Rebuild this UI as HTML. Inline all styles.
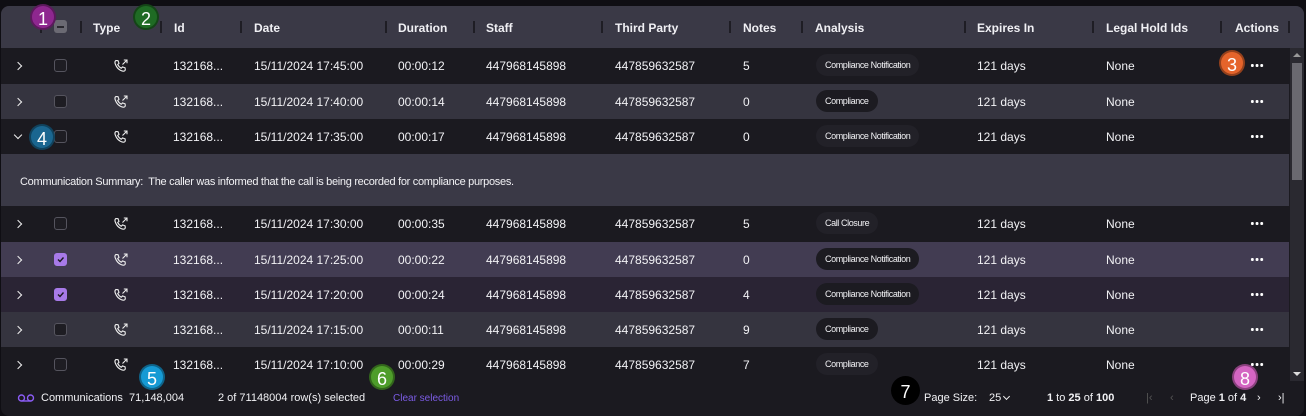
<!DOCTYPE html>
<html><head><meta charset="utf-8"><style>
*{margin:0;padding:0;box-sizing:border-box}
body{width:1306px;height:416px;background:#0f0e13;font-family:"Liberation Sans",sans-serif;color:#f2f2f5;overflow:hidden;position:relative}
.wrap{position:absolute;left:1px;top:6px;width:1303px;height:410px;background:#1b1a20;border-radius:8px;overflow:hidden}
.hdr{position:absolute;left:0;top:0;width:100%;height:42px;background:#3a3946}
.h{position:absolute;top:15px;font-size:12px;font-weight:bold;color:#f0f0f4}
.sep{position:absolute;top:15px;width:2px;height:12px;background:#1e1d24}
.row{position:absolute;left:0;width:1288px;height:35px;font-size:12px}
.d{background:#1b1a20}.l{background:#35343f}.s1{background:#423c52}.s2{background:#2a2434}
.row span{position:absolute;top:11px;white-space:nowrap}
.chev{position:absolute;left:14px;top:15px;width:6px;height:6px;border-right:1.6px solid #eee;border-top:1.6px solid #eee;transform:rotate(45deg)}
.cb{position:absolute;left:53px;top:11px;width:13px;height:13px;border:1px solid #55545e;border-radius:3px;background:#1e1d23}
.cb.on{background:#a77ae8;border-color:#a77ae8}
.ph{position:absolute;left:111px;top:9px}
.pill{position:absolute;left:815px;top:6px;height:22px;border-radius:11px;padding:0 9px;font-size:9px;line-height:22px;letter-spacing:-0.4px;background:#222128}
.l .pill{background:#1c1b21}
.s1 .pill{background:#1c1b21}.s2 .pill{background:#1c1b21}
.dots{position:absolute;left:1249px;top:16px;width:14px;height:3px;background:radial-gradient(circle,#fff 1.4px,transparent 1.6px) 0 0/4.7px 3px repeat-x}
.badge{position:absolute;width:26px;height:26px;border-radius:50%;color:#fff;font-size:18px;text-align:center;line-height:26px;border:2px solid rgba(0,0,0,.35)}
.foot{position:absolute;font-size:11px;top:392px}
</style></head><body>
<div class="wrap">
<div class="hdr">
<div style="position:absolute;left:53px;top:14px;width:13px;height:13px;background:#6b6a73;border-radius:3px"><div style="position:absolute;left:3px;top:6px;width:7px;height:1.5px;background:#2a2930"></div></div>
<div class="sep" style="left:39px"></div><div class="sep" style="left:79px"></div>
<div class="h" style="left:92px">Type</div><div class="sep" style="left:159px"></div>
<div class="h" style="left:173px">Id</div><div class="sep" style="left:239px"></div>
<div class="h" style="left:253px">Date</div><div class="sep" style="left:384px"></div>
<div class="h" style="left:397px">Duration</div><div class="sep" style="left:472px"></div>
<div class="h" style="left:485px">Staff</div><div class="sep" style="left:600px"></div>
<div class="h" style="left:614px">Third Party</div><div class="sep" style="left:728px"></div>
<div class="h" style="left:742px">Notes</div><div class="sep" style="left:800px"></div>
<div class="h" style="left:814px">Analysis</div><div class="sep" style="left:963px"></div>
<div class="h" style="left:976px">Expires In</div><div class="sep" style="left:1091px"></div>
<div class="h" style="left:1105px">Legal Hold Ids</div><div class="sep" style="left:1219px"></div>
<div class="h" style="left:1234px">Actions</div><div class="sep" style="left:1287px"></div>
</div>

<div class="row d" style="top:42px"><i class="chev"></i><i class="cb"></i><svg class="ph" width="18" height="18" viewBox="0 0 18 18" fill="none" stroke="#eee" stroke-width="1.1"><path d="M4 3.5l2 .2 1 2.6-1.3 1.2c.8 1.7 2 2.9 3.6 3.7l1.2-1.3 2.6 1 .2 2c-.3 1-1.2 1.4-2.2 1.3C7.300 13.500 4.400 10.600 3 6.200 2.800 5 3 4 4 3.500z"/><path d="M10.5 7.5L15 3M11.800 3H15v3.200"/></svg><span style="left:172px">132168...</span><span style="left:253px">15/11/2024 17:45:00</span><span style="left:397px">00:00:12</span><span style="left:485px">447968145898</span><span style="left:614px">447859632587</span><span style="left:742px">5</span><div class="pill">Compliance Notification</div><span style="left:976px">121 days</span><span style="left:1105px">None</span><i class="dots"></i></div>

<div class="row l" style="top:78px"><i class="chev"></i><i class="cb"></i><svg class="ph" width="18" height="18" viewBox="0 0 18 18" fill="none" stroke="#eee" stroke-width="1.1"><path d="M4 3.5l2 .2 1 2.6-1.3 1.2c.8 1.7 2 2.9 3.6 3.7l1.2-1.3 2.6 1 .2 2c-.3 1-1.2 1.4-2.2 1.3C7.300 13.500 4.400 10.600 3 6.200 2.800 5 3 4 4 3.500z"/><path d="M10.5 7.5L15 3M11.800 3H15v3.200"/></svg><span style="left:172px">132168...</span><span style="left:253px">15/11/2024 17:40:00</span><span style="left:397px">00:00:14</span><span style="left:485px">447968145898</span><span style="left:614px">447859632587</span><span style="left:742px">0</span><div class="pill">Compliance</div><span style="left:976px">121 days</span><span style="left:1105px">None</span><i class="dots"></i></div>

<div class="row d" style="top:113px"><i class="chev" style="transform:rotate(135deg);top:13px"></i><i class="cb"></i><svg class="ph" width="18" height="18" viewBox="0 0 18 18" fill="none" stroke="#eee" stroke-width="1.1"><path d="M4 3.5l2 .2 1 2.6-1.3 1.2c.8 1.7 2 2.9 3.6 3.7l1.2-1.3 2.6 1 .2 2c-.3 1-1.2 1.4-2.2 1.3C7.300 13.500 4.400 10.600 3 6.200 2.800 5 3 4 4 3.500z"/><path d="M10.5 7.5L15 3M11.800 3H15v3.200"/></svg><span style="left:172px">132168...</span><span style="left:253px">15/11/2024 17:35:00</span><span style="left:397px">00:00:17</span><span style="left:485px">447968145898</span><span style="left:614px">447859632587</span><span style="left:742px">0</span><div class="pill">Compliance Notification</div><span style="left:976px">121 days</span><span style="left:1105px">None</span><i class="dots"></i></div>

<div class="row" style="top:148px;height:52px;background:#3a3946"><span style="left:19px;top:22px;font-size:11px;letter-spacing:-0.3px">Communication Summary:&nbsp; The caller was informed that the call is being recorded for compliance purposes.</span></div>

<div class="row d" style="top:200px"><i class="chev"></i><i class="cb"></i><svg class="ph" width="18" height="18" viewBox="0 0 18 18" fill="none" stroke="#eee" stroke-width="1.1"><path d="M4 3.5l2 .2 1 2.6-1.3 1.2c.8 1.7 2 2.9 3.6 3.7l1.2-1.3 2.6 1 .2 2c-.3 1-1.2 1.4-2.2 1.3C7.300 13.500 4.400 10.600 3 6.200 2.800 5 3 4 4 3.500z"/><path d="M10.5 7.5L15 3M11.800 3H15v3.200"/></svg><span style="left:172px">132168...</span><span style="left:253px">15/11/2024 17:30:00</span><span style="left:397px">00:00:35</span><span style="left:485px">447968145898</span><span style="left:614px">447859632587</span><span style="left:742px">5</span><div class="pill">Call Closure</div><span style="left:976px">121 days</span><span style="left:1105px">None</span><i class="dots"></i></div>

<div class="row s1" style="top:236px"><i class="chev"></i><i class="cb on"><svg width="11" height="11" viewBox="0 0 11 11" style="position:absolute;left:0;top:0"><path d="M3 5.5l2 2 3.5-4" fill="none" stroke="#1b1a20" stroke-width="1.4"/></svg></i><svg class="ph" width="18" height="18" viewBox="0 0 18 18" fill="none" stroke="#eee" stroke-width="1.1"><path d="M4 3.5l2 .2 1 2.6-1.3 1.2c.8 1.7 2 2.9 3.6 3.7l1.2-1.3 2.6 1 .2 2c-.3 1-1.2 1.4-2.2 1.3C7.300 13.500 4.400 10.600 3 6.200 2.800 5 3 4 4 3.500z"/><path d="M10.5 7.5L15 3M11.800 3H15v3.200"/></svg><span style="left:172px">132168...</span><span style="left:253px">15/11/2024 17:25:00</span><span style="left:397px">00:00:22</span><span style="left:485px">447968145898</span><span style="left:614px">447859632587</span><span style="left:742px">0</span><div class="pill">Compliance Notification</div><span style="left:976px">121 days</span><span style="left:1105px">None</span><i class="dots"></i></div>

<div class="row s2" style="top:271px"><i class="chev"></i><i class="cb on"><svg width="11" height="11" viewBox="0 0 11 11" style="position:absolute;left:0;top:0"><path d="M3 5.5l2 2 3.5-4" fill="none" stroke="#1b1a20" stroke-width="1.4"/></svg></i><svg class="ph" width="18" height="18" viewBox="0 0 18 18" fill="none" stroke="#eee" stroke-width="1.1"><path d="M4 3.5l2 .2 1 2.6-1.3 1.2c.8 1.7 2 2.9 3.6 3.7l1.2-1.3 2.6 1 .2 2c-.3 1-1.2 1.4-2.2 1.3C7.300 13.500 4.400 10.600 3 6.200 2.800 5 3 4 4 3.500z"/><path d="M10.5 7.5L15 3M11.800 3H15v3.200"/></svg><span style="left:172px">132168...</span><span style="left:253px">15/11/2024 17:20:00</span><span style="left:397px">00:00:24</span><span style="left:485px">447968145898</span><span style="left:614px">447859632587</span><span style="left:742px">4</span><div class="pill">Compliance Notification</div><span style="left:976px">121 days</span><span style="left:1105px">None</span><i class="dots"></i></div>

<div class="row l" style="top:306px"><i class="chev"></i><i class="cb"></i><svg class="ph" width="18" height="18" viewBox="0 0 18 18" fill="none" stroke="#eee" stroke-width="1.1"><path d="M4 3.5l2 .2 1 2.6-1.3 1.2c.8 1.7 2 2.9 3.6 3.7l1.2-1.3 2.6 1 .2 2c-.3 1-1.2 1.4-2.2 1.3C7.300 13.500 4.400 10.600 3 6.200 2.800 5 3 4 4 3.500z"/><path d="M10.5 7.5L15 3M11.800 3H15v3.200"/></svg><span style="left:172px">132168...</span><span style="left:253px">15/11/2024 17:15:00</span><span style="left:397px">00:00:11</span><span style="left:485px">447968145898</span><span style="left:614px">447859632587</span><span style="left:742px">9</span><div class="pill">Compliance</div><span style="left:976px">121 days</span><span style="left:1105px">None</span><i class="dots"></i></div>

<div class="row d" style="top:341px"><i class="chev"></i><i class="cb"></i><svg class="ph" width="18" height="18" viewBox="0 0 18 18" fill="none" stroke="#eee" stroke-width="1.1"><path d="M4 3.5l2 .2 1 2.6-1.3 1.2c.8 1.7 2 2.9 3.6 3.7l1.2-1.3 2.6 1 .2 2c-.3 1-1.2 1.4-2.2 1.3C7.300 13.500 4.400 10.600 3 6.200 2.800 5 3 4 4 3.500z"/><path d="M10.5 7.5L15 3M11.800 3H15v3.200"/></svg><span style="left:172px">132168...</span><span style="left:253px">15/11/2024 17:10:00</span><span style="left:397px">00:00:29</span><span style="left:485px">447968145898</span><span style="left:614px">447859632587</span><span style="left:742px">7</span><div class="pill">Compliance</div><span style="left:976px">121 days</span><span style="left:1105px">None</span><i class="dots"></i></div>

<div style="position:absolute;left:1289px;top:42px;width:14px;height:333px;background:#2a2930"></div>
<div style="position:absolute;left:1291px;top:57px;width:10px;height:117px;background:#6a6970"></div>
<div style="position:absolute;left:1292px;top:47px;border:4px solid transparent;border-bottom:4px solid #999;border-top:0"></div>
<div style="position:absolute;left:1292px;top:366px;border:4px solid transparent;border-top:4px solid #ddd;border-bottom:0"></div>
</div>

<svg style="position:absolute;left:17px;top:394px" width="18" height="10" viewBox="0 0 18 10" fill="none" stroke="#8b5cf6" stroke-width="1.4"><circle cx="4.5" cy="4" r="3"/><circle cx="13.5" cy="4" r="3"/><path d="M4.5 7h9"/></svg>
<div class="foot" style="left:41px">Communications&nbsp; 71,148,004</div>
<div class="foot" style="left:218px">2 of 71148004 row(s) selected</div>
<div class="foot" style="left:393px;color:#7c5ce6;font-size:10px;top:393px">Clear selection</div>
<div class="foot" style="left:924px">Page Size:</div>
<div class="foot" style="left:989px">25</div>
<div style="position:absolute;left:1004px;top:394px;width:5px;height:5px;border-right:1.3px solid #eee;border-bottom:1.3px solid #eee;transform:rotate(45deg)"></div>
<div class="foot" style="left:1047px"><b>1</b> to <b>25</b> of <b>100</b></div>
<div class="foot" style="left:1146px;color:#555">|&lsaquo;</div>
<div class="foot" style="left:1170px;color:#555">&lsaquo;</div>
<div class="foot" style="left:1190px">Page <b>1</b> of <b>4</b></div>
<div class="foot" style="left:1257px">&rsaquo;</div>
<div class="foot" style="left:1278px">&rsaquo;|</div>

<div class="badge" style="left:30px;top:4px;background:#8e278f">1</div>
<div class="badge" style="left:133px;top:4px;background:#1f6b24">2</div>
<div class="badge" style="left:1219px;top:50px;background:#e5642b">3</div>
<div class="badge" style="left:29px;top:124px;background:#1a6690">4</div>
<div class="badge" style="left:139px;top:364px;background:#169ad4">5</div>
<div class="badge" style="left:369px;top:364px;background:#4e9d2a">6</div>
<div class="badge" style="left:891px;top:376px;background:#000;width:29px;height:29px;line-height:29px">7</div>
<div class="badge" style="left:1232px;top:364px;background:#d465c2">8</div>
</body></html>
